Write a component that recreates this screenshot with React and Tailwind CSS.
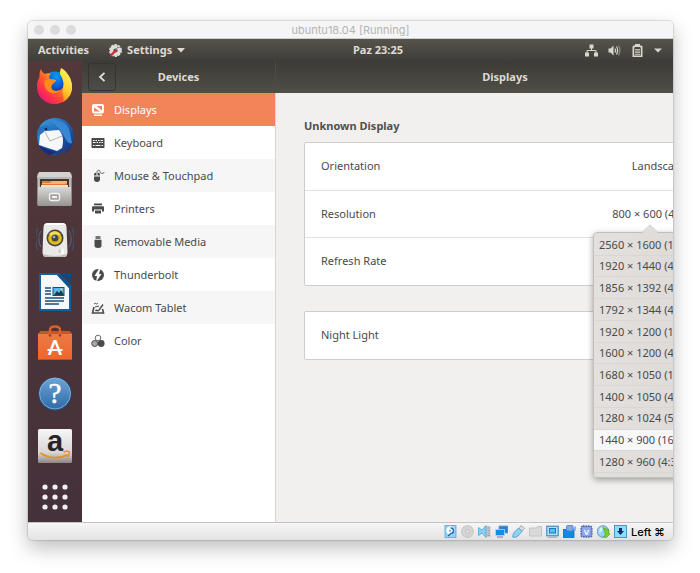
import React, { useState } from 'react';

const RESOLUTIONS = [
  '2560 × 1600 (16:10)',
  '1920 × 1440 (4:3)',
  '1856 × 1392 (4:3)',
  '1792 × 1344 (4:3)',
  '1920 × 1200 (16:10)',
  '1600 × 1200 (4:3)',
  '1680 × 1050 (16:10)',
  '1400 × 1050 (4:3)',
  '1280 × 1024 (5:4)',
  '1440 × 900 (16:10)',
  '1280 × 960 (4:3)',
];

/* ---------- Dock icons (36 x 36) ---------- */

const FirefoxIcon = () => (
  <svg viewBox="0 0 36 36" className="w-9 h-9">
    <defs>
      <linearGradient id="foxBody" x1="0.9" y1="0.1" x2="0.1" y2="0.9">
        <stop offset="0" stopColor="#fff44f" />
        <stop offset="0.3" stopColor="#ffb22c" />
        <stop offset="0.55" stopColor="#ff5a2c" />
        <stop offset="0.8" stopColor="#ff2a50" />
        <stop offset="1" stopColor="#d8188a" />
      </linearGradient>
      <linearGradient id="foxTail" x1="0.6" y1="0" x2="0.3" y2="1">
        <stop offset="0" stopColor="#fff261" />
        <stop offset="0.6" stopColor="#ffcf2e" />
        <stop offset="1" stopColor="#ff8a16" />
      </linearGradient>
      <radialGradient id="foxGlobe" cx="0.5" cy="0.2" r="0.9">
        <stop offset="0" stopColor="#0a9bf5" />
        <stop offset="0.6" stopColor="#0a5fd0" />
        <stop offset="1" stopColor="#2b2a86" />
      </radialGradient>
    </defs>
    <circle cx="18" cy="17" r="13.5" fill="url(#foxGlobe)" />
    <path d="M4 1 C5 4 6 5 8 6 C10 5 12 5 14 6 C12 8 12 9 13 11 L19 12 C19 14 16 15 15 17 C13 20 16 23 19 23 C22 23 24 21 26 18 C28 14 24 5 24 1 C31 5 35 11 35 19 C35 29 27 36 17.500 36 C8 36 0 29 0 19 C0 13 2 10 2.500 9 C2 6 3 3 4 1 Z" fill="url(#foxBody)" />
    <path d="M24 0 C30 3 35 11 35 19 C35 26 31 31 26 34 C28 29 25 27 26 22 C27 18 27 15 25 11 C22 7 23 3 24 0 Z" fill="url(#foxTail)" />
    <path d="M14 6 C18 4 21 5 23.500 7 C26 11 27 15 26 19 C24.500 22 22 23 19 23 C16 23 13 20 15 17 C16 15 19 14 19 12 L13 11 C12 9 12 8 14 6 Z" fill="url(#foxGlobe)" />
    <path d="M8 12 L13 11 L19 12 C19 14 16 15 15 17 C13 20 16 23 19 23 C21 23 22 22 23 22 C20 27 12 26 9 21 C7 17 7 14 8 12 Z" fill="#ff8d1c" />
  </svg>
);

const ThunderbirdIcon = () => (
  <svg viewBox="0 0 38 38" className="w-[38px] h-[38px]">
    <defs>
      <linearGradient id="birdBody" x1="0" y1="0" x2="1" y2="1">
        <stop offset="0" stopColor="#3ba6dd" />
        <stop offset="0.5" stopColor="#1e63b6" />
        <stop offset="1" stopColor="#16256e" />
      </linearGradient>
    </defs>
    <path d="M2 13 C4 5 11 0 19 0 C30 0 38 8 38 19 C38 27 34 33 28 36 L31 30 L23 37 C15 38 6 35 3 28 C1 23 1 18 2 13 Z" fill="url(#birdBody)" />
    <path d="M13 2 C25 1 33 6 34 15 L36 25 C30 28 30 14 13 2 Z" fill="#3986d2" />
    <path d="M4 17 L9 13 L23 12 C27 17 28 22 26 30 L21 33 L3 27 Z" fill="#f7f7f7" />
    <path d="M9 14 L14 23 L26 18" fill="none" stroke="#a9a9a9" strokeWidth="0.9" />
    <path d="M1 14 C3 8 9 6 14 9 L18 12 L8 13 L2 18 Z" fill="#2874c2" />
    <circle cx="10" cy="11" r="1.300" fill="#132a58" />
    <path d="M3 27 C9 31 15 32 21 34 L14 37 C8 35 4 31 3 27 Z" fill="#1a2c78" />
  </svg>
);

const FilesIcon = () => (
  <svg viewBox="0 0 36 36" className="w-9 h-9">
    <defs>
      <linearGradient id="cabinet" x1="0" y1="0" x2="0" y2="1">
        <stop offset="0" stopColor="#d9d8d5" />
        <stop offset="1" stopColor="#96958f" />
      </linearGradient>
    </defs>
    <rect x="0" y="2" width="35" height="33" rx="2" fill="#8f8e89" />
    <path d="M2 1 H33 L35 7 H0 Z" fill="#d4d3cf" />
    <rect x="1" y="6" width="33" height="28" fill="#b9b8b3" />
    <rect x="3" y="8" width="29" height="8" fill="#46352b" />
    <path d="M5 10 H30 V16 H5 Z" fill="#e17a35" />
    <path d="M5 12 H13 L15 10 H30 V12 L28 13 H5 Z" fill="#f4b27a" />
    <path d="M4 14 H31 V16 H4 Z" fill="#f7e3c8" />
    <rect x="1" y="16" width="33" height="19" rx="1" fill="url(#cabinet)" />
    <rect x="12.500" y="22.500" width="10" height="7" rx="1.500" fill="#a5a49f" stroke="#f3f3f3" strokeWidth="1.300" />
    <rect x="15" y="25" width="5" height="2" fill="#f3f3f3" />
  </svg>
);

const RhythmboxIcon = () => (
  <svg viewBox="0 0 38 36" className="w-[38px] h-9">
    <g fill="none" stroke="#486287" strokeWidth="1.200">
      <path d="M5 9 C2 13 2 21 5 25" />
      <path d="M2 6 C-1 12 -1 22 2 28" opacity="0.6" />
      <path d="M33 9 C36 13 36 21 33 25" />
      <path d="M36 6 C39 12 39 22 36 28" opacity="0.6" />
    </g>
    <path d="M12 1 H26 Q30 1 30.500 5 L31.500 30 Q31.500 35 28 35 H10 Q6.500 35 6.500 30 L7.500 5 Q8 1 12 1 Z" fill="#e9e9e7" />
    <path d="M12 1 H26 Q29 1 30 3 H8 Q9 1 12 1 Z" fill="#ffffff" />
    <path d="M7 32 Q19 36 31 32 Q31 35 28 35 H10 Q7 35 7 32 Z" fill="#bdbdba" />
    <circle cx="19" cy="16" r="8.500" fill="#4a4740" />
    <circle cx="19" cy="16" r="6.800" fill="#e0bd1f" />
    <path d="M13 12 A7 7 0 0 1 24 12 L19 16 Z" fill="#f5dc57" />
    <circle cx="19" cy="16" r="3.500" fill="#44464d" />
    <circle cx="18" cy="15" r="1.300" fill="#a8adba" />
    <circle cx="24" cy="29" r="2" fill="#cfcfcc" />
    <rect x="25" y="27" width="3" height="5" rx="1" fill="#fafafa" />
  </svg>
);

const WriterIcon = () => (
  <svg viewBox="0 0 36 38" className="w-9 h-[38px]">
    <path d="M3 0 H22 L34 12 V36 Q34 38 32 38 H4 Q2 38 2 36 V2 Q2 0 3 0 Z" fill="#12609c" />
    <path d="M24 0 H34 V10 Z" fill="#0c4a84" />
    <path d="M4 2 H20 L32 15 V36 H4 Z" fill="#f6f8fa" />
    <path d="M20 2 L32 15 L34 12 L23 1 Z" fill="#0e548f" />
    <g stroke="#174f7c" strokeWidth="1.400">
      <path d="M8 15 H14 M8 18 H14 M8 21 H14 M8 25 H27 M8 28 H27 M8 31 H22" />
    </g>
    <rect x="16" y="14.500" width="11" height="8" fill="#59b8ec" stroke="#174f7c" strokeWidth="1" />
    <path d="M17 22 L20 18 L22 20 L24 17 L27 22 Z" fill="#1d3b50" />
    <circle cx="24.500" cy="16.500" r="1" fill="#ffd94a" />
  </svg>
);

const SoftwareIcon = () => (
  <svg viewBox="0 0 36 36" className="w-9 h-9">
    <defs>
      <linearGradient id="bag" x1="0" y1="0" x2="0" y2="1">
        <stop offset="0" stopColor="#ea7e47" />
        <stop offset="1" stopColor="#f0642b" />
      </linearGradient>
    </defs>
    <path d="M1 9 L4 6 H32 L35 9 V35 H1 Z" fill="url(#bag)" />
    <path d="M1 9 L4 6 H32 L35 9 Z" fill="#c85527" />
    <path d="M13 11 V5 Q13 1.500 18 1.500 Q23 1.500 23 5 V11" fill="none" stroke="#d95f2f" strokeWidth="2.500" />
    <circle cx="13" cy="10.500" r="1.200" fill="#a13f16" />
    <circle cx="23" cy="10.500" r="1.200" fill="#a13f16" />
    <text x="18" y="30" textAnchor="middle" fontSize="20" fontWeight="700" fontFamily="Lato, sans-serif" fill="#fff">A</text>
    <path d="M10.500 25 H25.500" stroke="#fff" strokeWidth="2" />
    <path d="M1 34 H35 V35 H1 Z" fill="#c4511f" />
  </svg>
);

const HelpIcon = () => (
  <svg viewBox="0 0 36 36" className="w-9 h-9">
    <defs>
      <linearGradient id="helpBall" x1="0" y1="0" x2="0" y2="1">
        <stop offset="0" stopColor="#6aa3d6" />
        <stop offset="1" stopColor="#2f6ca8" />
      </linearGradient>
    </defs>
    <circle cx="18" cy="18" r="16.500" fill="#234f7d" />
    <circle cx="18" cy="17.500" r="15.500" fill="url(#helpBall)" stroke="#8cbbe2" strokeWidth="0.800" />
    <text x="18" y="27" textAnchor="middle" fontSize="29" fontFamily="'Liberation Serif', serif" fill="#fff" stroke="#fff" strokeWidth="0.500">?</text>
  </svg>
);

const AmazonIcon = () => (
  <svg viewBox="0 0 36 36" className="w-9 h-9 overflow-visible">
    <defs>
      <linearGradient id="amazonTile" x1="0" y1="0" x2="0" y2="1">
        <stop offset="0" stopColor="#f7f7f7" />
        <stop offset="0.7" stopColor="#d8d5d6" />
        <stop offset="1" stopColor="#8d8588" />
      </linearGradient>
    </defs>
    <rect x="1" y="1" width="34" height="34" rx="1.500" fill="url(#amazonTile)" />
    <text x="18" y="23" textAnchor="middle" fontSize="29" fontWeight="700" fontFamily="'Liberation Sans', sans-serif" fill="#262626">a</text>
    <path d="M3.500 25 C12 31 23 31 30.500 26.500" fill="none" stroke="#e8921e" strokeWidth="1.800" />
    <path d="M26.500 24 C29 23 31.500 23 32.500 24 C32.500 26 31.500 28 30 29.500" fill="none" stroke="#e8921e" strokeWidth="1.500" />
  </svg>
);

const AppsIcon = () => (
  <svg viewBox="0 0 36 36" className="w-9 h-9" fill="#f1eff0">
    {[8, 18, 28].map((y) => [8, 18, 28].map((x) => <circle key={`${x}-${y}`} cx={x} cy={y} r="2.600" />))}
  </svg>
);

const DOCK = [
  { name: 'Firefox', icon: FirefoxIcon },
  { name: 'Thunderbird Mail', icon: ThunderbirdIcon },
  { name: 'Files', icon: FilesIcon },
  { name: 'Rhythmbox', icon: RhythmboxIcon },
  { name: 'LibreOffice Writer', icon: WriterIcon },
  { name: 'Ubuntu Software', icon: SoftwareIcon },
  { name: 'Help', icon: HelpIcon },
  { name: 'Amazon', icon: AmazonIcon },
  { name: 'Show Applications', icon: AppsIcon },
];

/* ---------- Device list icons (14 x 14) ---------- */

const DisplayIcon = () => (
  <>
    <path fillRule="evenodd" d="M3 1 H11 Q13 1 13 3 V8 Q13 10.500 11 10.500 H3 Q1 10.500 1 8 V3 Q1 1 3 1 Z M3 3 V8.500 H11 V3 Z" />
    <path d="M3 3 H5.500 L11 7.500 V9 H9.500 L3 4.500 Z" />
    <path d="M3 11.500 H11 V13 H3 Z" />
  </>
);

const KeyboardIcon = () => (
  <>
    <rect x="0.500" y="2" width="13" height="10" rx="0.800" />
    <path d="M2 4.500 H3.500 M4.500 4.500 H6 M7 4.500 H8.500 M9.500 4.500 H12 M2 6.500 H4.500 M5.500 6.500 H7 M8 6.500 H9.500 M10.500 6.500 H12 M2 9.500 H3.500 M4.500 9.500 H9.500 M10.500 9.500 H12" stroke="#fff" strokeWidth="1.200" fill="none" />
  </>
);

const MouseIcon = () => (
  <>
    <path d="M3 6.500 V5.500 Q3 3.500 5.500 3.500 V6.500 Z M6.500 6.500 V3.500 Q9 3.500 9 5.500 V6.500 Z M3 7.500 H9 V10 Q9 13 6 13 Q3 13 3 10 Z" />
    <path d="M6 3.500 C6 1 8.500 0.500 9 2.500 C9.500 5 12 5 13.500 3" fill="none" stroke="currentColor" strokeWidth="0.900" />
  </>
);

const PrinterIcon = () => (
  <>
    <rect x="3" y="1.500" width="8" height="1.800" />
    <path fillRule="evenodd" d="M2 4.200 H12 Q13 4.200 13 5.200 V9.500 H11 V7.500 H3 V9.500 H1 V5.200 Q1 4.200 2 4.200 Z" />
    <path d="M4 8.500 H10 V11.500 H4 Z" />
  </>
);

const UsbIcon = () => (
  <>
    <path d="M4.500 1 H9.500 V4 H4.500 Z" opacity="0.75" />
    <path d="M3.500 4.800 H10.500 V10.500 Q10.500 13 7 13 Q3.500 13 3.500 10.500 Z" />
  </>
);

const ThunderboltIcon = () => (
  <>
    <circle cx="7" cy="7" r="6" />
    <path d="M8.500 0 L3.500 8 H6 L5 14 L10.500 6 H8 L9.500 0 Z" fill="#fff" />
  </>
);

const TabletIcon = () => (
  <>
    <path d="M3 6 L1.500 12 H12.500 L11.500 8" fill="none" stroke="currentColor" strokeWidth="1.600" />
    <path d="M4.500 10 C6 8 7 11 8 9 L12 3.500" fill="none" stroke="currentColor" strokeWidth="1.400" />
    <path d="M3 3 C5 1 5 4.500 7 2 M4 6 L8 5" fill="none" stroke="currentColor" strokeWidth="1" />
  </>
);

const ColorIcon = () => (
  <>
    <circle cx="7" cy="4" r="2.800" fill="none" stroke="currentColor" strokeWidth="1" opacity="0.8" />
    <circle cx="3.700" cy="9.500" r="3" fill="#a8a8a8" stroke="currentColor" strokeWidth="1" />
    <circle cx="10.200" cy="9.500" r="3.400" />
  </>
);

const DEVICES = [
  { name: 'Displays', icon: DisplayIcon },
  { name: 'Keyboard', icon: KeyboardIcon },
  { name: 'Mouse & Touchpad', icon: MouseIcon, shaded: true },
  { name: 'Printers', icon: PrinterIcon },
  { name: 'Removable Media', icon: UsbIcon, shaded: true },
  { name: 'Thunderbolt', icon: ThunderboltIcon },
  { name: 'Wacom Tablet', icon: TabletIcon, shaded: true },
  { name: 'Color', icon: ColorIcon },
];

/* ---------- VirtualBox status icons (13 x 13) ---------- */

const STATUS = [
  {
    name: 'Hard disks',
    art: (
      <>
        <rect x="1" y="0.500" width="11" height="12" fill="#8fd3f7" stroke="#5fa6d2" strokeWidth="0.800" />
        <circle cx="6.500" cy="5.500" r="4.200" fill="#fff" />
        <path d="M6.500 3 A2.500 2.500 0 0 1 7 8.500 L4 11" fill="none" stroke="#2769b8" strokeWidth="1.600" />
        <circle cx="6" cy="5.800" r="1" fill="#4d9bdc" />
      </>
    ),
  },
  {
    name: 'Optical drives',
    art: (
      <>
        <circle cx="6.500" cy="6.500" r="6" fill="#d4d4d4" stroke="#c0c0c0" strokeWidth="0.800" />
        <circle cx="6.500" cy="6.500" r="1.800" fill="#e8e8e8" stroke="#b5b5b5" strokeWidth="0.800" />
      </>
    ),
  },
  {
    name: 'Audio',
    art: (
      <>
        <rect x="7" y="1" width="5.500" height="11" fill="#c9c9c9" />
        <path d="M9.500 3 H12 M9.500 5.500 H12 M9.500 8 H12 M9.500 10.500 H12" stroke="#9c9c9c" />
        <path d="M0.500 2.500 L4 5 L8 0.500 V12.500 L4 8 L0.500 10.500 Z" fill="#86d0f5" stroke="#4fa3d6" strokeWidth="0.800" />
      </>
    ),
  },
  {
    name: 'Network',
    art: (
      <>
        <rect x="4" y="1" width="9" height="7" fill="#1a86dd" stroke="#7a9fbd" strokeWidth="0.800" />
        <rect x="0.500" y="4.500" width="9" height="6" fill="#168ae4" stroke="#b9d5e8" strokeWidth="0.800" />
        <path d="M2 12 H8" stroke="#8a9299" strokeWidth="1.200" />
      </>
    ),
  },
  {
    name: 'USB',
    art: (
      <>
        <path d="M9 0.500 L12.500 3.500 L10 6 L7 3.500 Z" fill="#ddd" stroke="#9a9a9a" strokeWidth="0.800" />
        <path d="M6.500 3 L10 6.500 L6 11 Q3 13 0.800 12.200 Q0.500 9 2.500 7 Z" fill="#8ed2f6" stroke="#4a99cc" strokeWidth="0.800" />
      </>
    ),
  },
  {
    name: 'Shared folders',
    art: <path d="M0.500 3 H7.500 L8.500 1.500 H12.500 V11 H0.500 Z" fill="#d9d9d9" stroke="#bdbdbd" strokeWidth="0.800" />,
  },
  {
    name: 'Display',
    art: (
      <>
        <rect x="0.500" y="1" width="12" height="10" fill="#6a9fd0" stroke="#5a90c2" strokeWidth="0.800" />
        <rect x="1.500" y="2" width="10" height="8" fill="#a8e2fb" />
        <rect x="3.500" y="3.500" width="6" height="4.500" fill="#58bdf2" stroke="#1f7ac5" strokeWidth="1" />
        <path d="M2 12.300 H11" stroke="#a0a9b1" strokeWidth="1" />
      </>
    ),
  },
  {
    name: 'Recording',
    art: (
      <>
        <rect x="0.500" y="4.500" width="10.500" height="8" fill="#138ae2" stroke="#0b6dbb" strokeWidth="0.800" />
        <rect x="3.500" y="0.500" width="6.500" height="5.500" rx="1" fill="#82a9ec" stroke="#5378bb" strokeWidth="0.800" />
        <path d="M10 3 L12.800 1 V6 L10 4.500 Z" fill="#82a9ec" />
      </>
    ),
  },
  {
    name: 'Processor',
    art: (
      <>
        <rect x="1" y="1" width="11" height="11" rx="2" fill="#7f97e0" stroke="#4a62ad" strokeWidth="1.300" strokeDasharray="1.500 1" />
        <rect x="2.500" y="2.500" width="8" height="8" fill="#93a9ec" />
        <text x="6.500" y="9.500" textAnchor="middle" fontSize="8" fontFamily="'Liberation Sans', sans-serif" fontWeight="700" fill="#fff">V</text>
      </>
    ),
  },
  {
    name: 'Mouse integration',
    art: (
      <>
        <circle cx="6" cy="6.500" r="5.800" fill="#8fd8f6" stroke="#4b8cad" strokeWidth="0.800" />
        <path d="M3 3 L6 2 L5 6 L2 8 Z" fill="#d5f2fd" />
        <path d="M6 2.500 L12 5 L11 7 L13 9 L9.500 12.500 L6.500 12 L8.500 9 Z" fill="#79cf2b" stroke="#4c9a14" strokeWidth="0.600" />
      </>
    ),
  },
  {
    name: 'Keyboard capture',
    art: (
      <>
        <rect x="0.500" y="0.500" width="12" height="12" fill="#8cdcfb" stroke="#3b8fbb" strokeWidth="0.900" />
        <path d="M5 3 H8 V6 H10 L6.500 10 L3 6 H5 Z" fill="#0d2f6e" />
      </>
    ),
  },
];

/* ---------- Parts ---------- */

const TitleBar = () => (
  <div className="flex items-center h-[18px] px-[6px] bg-[#f5f5f5] border-b border-[#c9ced1]">
    <div className="flex flex-1 gap-[6px]">
      <button aria-label="Close" className="w-[10px] h-[10px] rounded-full bg-[#dcdcdc]" />
      <button aria-label="Minimise" className="w-[10px] h-[10px] rounded-full bg-[#dcdcdc]" />
      <button aria-label="Zoom" className="w-[10px] h-[10px] rounded-full bg-[#dcdcdc]" />
    </div>
    <span className="font-[Inter,sans-serif] text-[11px] leading-4 text-[#b4b4b4]">ubuntu18.04 [Running]</span>
    <div className="flex-1" />
  </div>
);

const TopPanel = () => (
  <div className="flex items-center h-[22px] px-[10px] bg-linear-to-b from-[#56544a] to-[#3e3d38] text-[#dfdbd2] text-[11px] font-bold">
    <div className="flex flex-1 items-center gap-5">
      <button>Activities</button>
      <button className="flex items-center gap-[5px]">
        <svg viewBox="0 0 13 13" className="w-[13px] h-[13px]">
          <circle cx="6.500" cy="6.500" r="3.800" fill="none" stroke="#dedede" strokeWidth="3.400" />
          <circle cx="6.500" cy="6.500" r="5.700" fill="none" stroke="#dedede" strokeWidth="1.500" strokeDasharray="2.500 1.080" />
          <path d="M1.500 12 L7.500 5.500" stroke="#c8343a" strokeWidth="2.400" />
          <path d="M7 6 L8.500 3.500 L11 3" stroke="#8c8a85" strokeWidth="1.200" fill="none" />
        </svg>
        <span>Settings</span>
        <svg viewBox="0 0 8 5" className="w-2 h-[5px]"><path d="M0 0 H8 L4 4.500 Z" fill="#dfdbd2" /></svg>
      </button>
    </div>
    {/* centred on the guest screen, which is wider than the window */}
    <button className="ml-14">Paz 23:25</button>
    <div className="flex flex-1 items-center justify-end gap-[10px] pr-px">
      <svg viewBox="0 0 13 13" className="w-[13px] h-[13px]" fill="#d9d6ce">
        <path d="M4.500 0.500 H8.500 V4.500 H4.500 Z M0 8.500 H4 V12.500 H0 Z M9 8.500 H13 V12.500 H9 Z" />
        <path d="M6.500 4 V6.500 M2 9 V6.500 H11 V9" fill="none" stroke="#d9d6ce" />
      </svg>
      <svg viewBox="0 0 13 13" className="w-[13px] h-[13px]" fill="#d9d6ce">
        <path d="M0.500 4.500 H2.500 L5.500 1.500 V11.500 L2.500 8.500 H0.500 Z" />
        <path d="M7 4.500 Q8.200 6.500 7 8.500" fill="none" stroke="#d9d6ce" strokeWidth="1.200" />
        <path d="M8.500 2.500 Q10.800 6.500 8.500 10.500" fill="none" stroke="#d9d6ce" strokeWidth="1.200" />
        <path d="M10.500 1.500 Q13.500 6.500 10.500 11.500" fill="none" stroke="#8a877f" strokeWidth="1.200" />
      </svg>
      <svg viewBox="0 0 13 13" className="w-[13px] h-[13px]" fill="#d9d6ce">
        <path fillRule="evenodd" d="M4 0 H9 V1.500 H10.500 L11.500 2.500 V13 H1.500 V2.500 L2.500 1.500 H4 Z M4 3 L3.200 4 V11.500 H9.800 V4 L9 3 Z" />
        <path d="M4 5.300 H9 V6.500 H4 Z M4 7.500 H9 V8.700 H4 Z M4 9.700 H9 V10.800 H4 Z" />
      </svg>
      <svg viewBox="0 0 8 5" className="w-2 h-[5px]"><path d="M0 0.500 H8 L4 4.500 Z" fill="#d9d6ce" /></svg>
    </div>
  </div>
);

const Dock = () => (
  <nav className="flex flex-col items-center justify-between w-[54px] shrink-0 py-[7px] pr-px bg-linear-to-b from-[#523839] to-[#45313a]">
    {DOCK.map(({ name, icon: Icon }) => (
      <button key={name} aria-label={name} className="flex items-center justify-center h-9">
        <Icon />
      </button>
    ))}
  </nav>
);

const DeviceList = ({ active, onSelect }) => (
  <div className="flex flex-col w-[194px] shrink-0">
    <div className="flex items-center h-8 px-[6px] border-r border-[#4b4a43] bg-linear-to-b from-[#3c3b37] to-[#504e46]">
      <button aria-label="Back" className="flex items-center justify-center w-7 h-7 rounded-[3px] border border-[#35342f]">
        <svg viewBox="0 0 8 10" className="w-2 h-[10px]"><path d="M6.500 0.800 L2 5 L6.500 9.200" fill="none" stroke="#e3e0d8" strokeWidth="1.800" /></svg>
      </button>
      <h1 className="flex-1 pr-7 text-center text-[11px] font-bold text-[#dfdbd2]">Devices</h1>
    </div>
    <div className="flex flex-col flex-1 bg-white border-r border-[#d8d6d3]">
      {DEVICES.map(({ name, icon: Icon, shaded }) => {
        const idle = shaded ? 'bg-[#f6f6f6] text-[#4a4a4a]' : 'bg-white text-[#4a4a4a]';
        return (
          <button
            key={name}
            onClick={() => onSelect(name)}
            className={`flex items-center gap-[9px] h-[33px] pt-px pl-[9px] text-left ${active === name ? 'bg-[#f28459] text-white' : idle}`}
          >
            <svg viewBox="0 0 14 14" className="w-[14px] h-[14px]" fill="currentColor"><Icon /></svg>
            {name}
          </button>
        );
      })}
    </div>
  </div>
);

const ResolutionMenu = ({ hovered, onHover }) => (
  <div className="absolute right-0 top-[41px] z-10 w-[112px] pt-px pb-[4px] rounded-[4px] border border-[#c2bfbb] bg-linear-to-r from-[#e3e0de] to-[#dcd9d7] shadow-[0_2px_6px_rgba(0,0,0,0.35)]">
    <svg viewBox="0 0 18 10" className="absolute -top-[9px] left-[47px] w-[18px] h-[10px]">
      <path d="M0 10 L9 1 L18 10 Z" fill="#e0dddb" />
      <path d="M0 9.500 L9 0.800 L18 9.500" fill="none" stroke="#c9c6c3" strokeWidth="0.800" />
    </svg>
    <ul className="grid auto-rows-fr h-[239px]">
      {RESOLUTIONS.map((res) => (
        <li key={res} className="flex border-b border-[#d9d6d4]">
          <button
            onMouseEnter={() => onHover(res)}
            className={`flex-1 pt-px pl-[5px] text-left whitespace-nowrap ${hovered === res ? 'bg-[#f8f7f7]' : ''}`}
          >
            {res}
          </button>
        </li>
      ))}
    </ul>
  </div>
);

const DisplaysPanel = () => {
  const [menuOpen, setMenuOpen] = useState(true);
  const [hovered, setHovered] = useState('1440 × 900 (16:10)');

  return (
    <div className="flex-1 min-w-0">
      {/* the guest screen runs on past the right edge of the window */}
      <div className="-mr-[61px]">
        <div className="flex items-center justify-center h-8 bg-linear-to-b from-[#3c3b37] to-[#504e46] text-[11px] font-bold text-[#dfdbd2]">
          <h2>Displays</h2>
        </div>
        <div className="px-7 pt-[23px]">
          <h3 className="mb-[6px] text-[11px] leading-5 font-bold text-[#4f4f4f]">Unknown Display</h3>
          <div className="rounded-[2px] border border-[#cfcdca] bg-white">
            <div className="flex items-center justify-between h-12 pl-4 pr-[18px] border-b border-[#e2e1df]">
              <span>Orientation</span>
              <button>Landscape</button>
            </div>
            <div className="relative flex items-center justify-between h-[47px] pl-4 pr-[18px] border-b border-[#e2e1df]">
              <span>Resolution</span>
              <button onClick={() => setMenuOpen(!menuOpen)}>800 × 600 (4:3)</button>
              {menuOpen && <ResolutionMenu hovered={hovered} onHover={setHovered} />}
            </div>
            <div className="flex items-center h-[47px] pl-4">
              <span>Refresh Rate</span>
            </div>
          </div>
          <div className="mt-[25px] rounded-[2px] border border-[#cfcdca] bg-white">
            <div className="flex items-center h-[47px] pl-4">
              <span>Night Light</span>
            </div>
          </div>
        </div>
      </div>
    </div>
  );
};

const StatusBar = () => (
  <div className="flex items-center justify-end gap-1 h-[18px] pr-2 border-t border-[#c4c4c4] bg-linear-to-b from-[#f6f6f6] to-[#e3e3e3]">
    {STATUS.map(({ name, art }) => (
      <svg key={name} viewBox="0 0 13 13" className="w-[13px] h-[13px]" role="img" aria-label={name}>{art}</svg>
    ))}
    <span className="font-[Inter,'DejaVu_Sans',sans-serif] text-[11px] leading-4 font-medium text-black">Left ⌘</span>
  </div>
);

const App = () => {
  const [active, setActive] = useState('Displays');

  return (
    <div className="flex flex-col min-h-screen pt-[21px] pr-[27px] pb-[33px] pl-7 bg-white font-['Noto_Sans',sans-serif] text-[11px] text-[#4a4a4a]">
      <div className="flex flex-col flex-1 overflow-hidden rounded-[5px] shadow-[0_0_1px_1px_rgba(0,0,0,0.12),0_8px_20px_rgba(0,0,0,0.26)]">
        <TitleBar />
        <TopPanel />
        <div className="flex flex-1 min-w-0 bg-[#f1f0ee]">
          <Dock />
          <DeviceList active={active} onSelect={setActive} />
          <DisplaysPanel />
        </div>
        <StatusBar />
      </div>
    </div>
  );
};

export default App;
